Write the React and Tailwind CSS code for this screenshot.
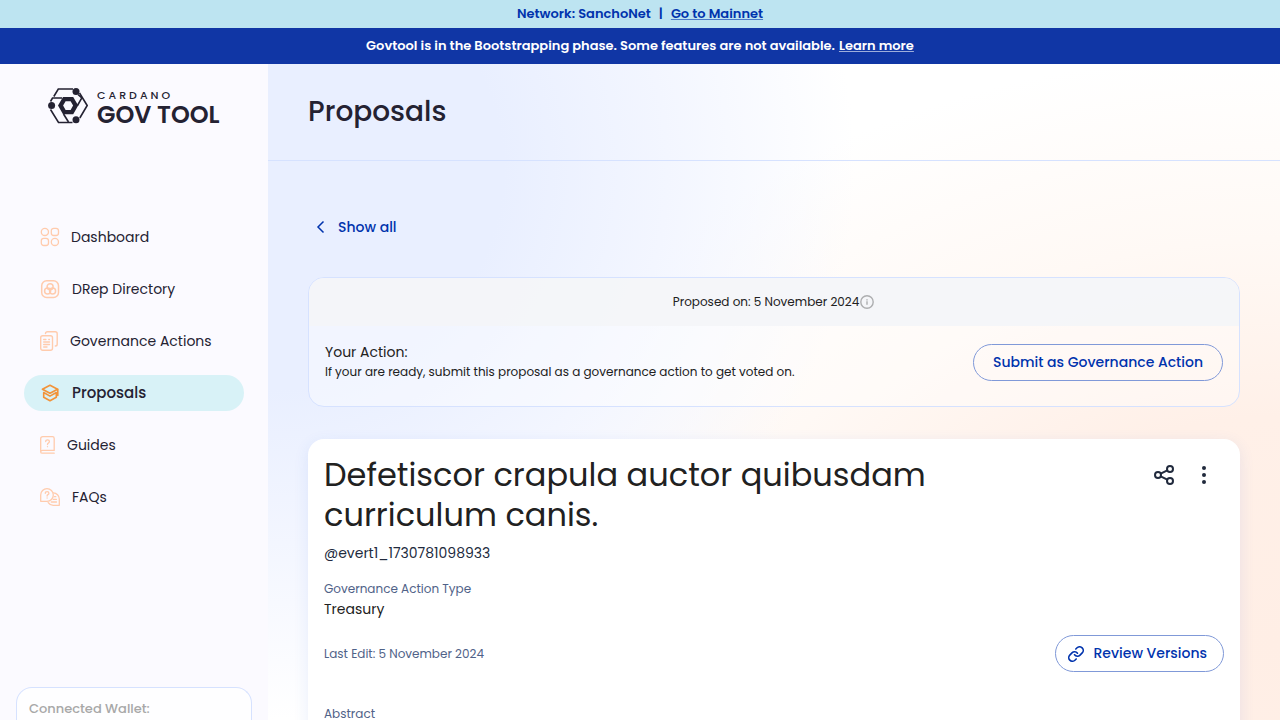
import React from "react";

const peach = "#ffcbad";

function Logo() {
  return (
    <svg width="40" height="36" viewBox="0 0 40 36" fill="none" aria-hidden="true">
      <g stroke="#242232" strokeWidth="1.6">
        <path d="M5.800 8.500 10.300 1H25" />
        <path d="M2.500 13.500 4.500 10H14" />
        <path d="M31.500 5 39.200 17.500 31.800 30" />
        <path d="M2.500 21.500 10.500 34.500H24.500" />
        <path d="M15.500 26 20.500 34" />
        <path d="M30 6.500 33.800 10 29.500 17.500" />
      </g>
      <path fillRule="evenodd" fill="#242232" d="M15 9h10.200l5 8.600-5 8.600H15l-5-8.600zM17.600 13.300 15.100 17.600l2.500 4.300h5l2.500-4.300-2.500-4.300z" />
      <circle cx="28" cy="3.500" r="3.500" fill="#242232" />
      <circle cx="3.600" cy="17.500" r="3.500" fill="#242232" />
      <circle cx="28" cy="31.800" r="3.500" fill="#242232" />
    </svg>
  );
}

function DashboardIcon() {
  return (
    <svg width="20" height="20" viewBox="0 0 20 20" fill="none" stroke={peach} strokeWidth="1.300" aria-hidden="true">
      <circle cx="4.900" cy="4.900" r="3.600" />
      <rect x="11.300" y="1.300" width="7.200" height="7.200" rx="2.500" />
      <rect x="1.300" y="11.300" width="7.200" height="7.200" rx="2.500" />
      <circle cx="14.900" cy="14.900" r="3.600" />
    </svg>
  );
}

function DirectoryIcon() {
  return (
    <svg width="20" height="20" viewBox="0 0 20 20" fill="none" stroke={peach} strokeWidth="1.500" aria-hidden="true">
      <rect x="1.700" y="1.700" width="16.800" height="16.800" rx="5" />
      <circle cx="10.100" cy="7.700" r="3" />
      <circle cx="7.600" cy="11.900" r="3" />
      <circle cx="12.600" cy="11.900" r="3" />
    </svg>
  );
}

function ActionsIcon() {
  return (
    <svg width="18" height="20" viewBox="0 0 18 20" fill="none" stroke={peach} strokeWidth="1.400" strokeLinecap="round" strokeLinejoin="round" aria-hidden="true">
      <rect x="0.700" y="4.800" width="11.800" height="14.500" rx="2" />
      <path d="M5.500 2.500Q5.500.7 7.500.7h7.700Q17.200.7 17.200 2.700v10.500Q17.200 15 15.300 15" />
      <path d="M3.700 8.500h2.200M8.800 8.500h.6M3.700 11h5.800M3.700 13.500h5.800M3.700 16h3.300" />
    </svg>
  );
}

function ProposalsIcon() {
  return (
    <svg width="20" height="20" viewBox="0 0 20 20" fill="none" stroke="#f29339" strokeWidth="1.600" strokeLinecap="round" strokeLinejoin="round" aria-hidden="true">
      <path d="M10 2.300 17.600 6.200 10 10.200 2.400 6.200z" />
      <path d="M17.800 6.400v6" />
      <path d="M3.700 9.500v4.700L10 17.700l6.300-3.500V9.500L10 13.100z" />
    </svg>
  );
}

function GuidesIcon() {
  return (
    <svg width="15" height="18" viewBox="0 0 15 18" fill="none" stroke={peach} strokeWidth="1.300" strokeLinecap="round" strokeLinejoin="round" aria-hidden="true">
      <path d="M.7 15.300V2.700q0-2 2-2H12.500q1.700 0 1.700 1.700v12H2.500Q.7 14.400.7 16q0 1.200 1.800 1.200h11.700" />
      <path d="M5.700 5.600q0-1.700 1.900-1.700 1.800 0 1.800 1.600 0 1-1.100 1.600-.8.400-.8 1.500M7.500 10.600v.1" />
    </svg>
  );
}

function FaqsIcon() {
  return (
    <svg width="20" height="18" viewBox="0 0 20 18" fill="none" stroke={peach} strokeWidth="1.300" strokeLinecap="round" strokeLinejoin="round" aria-hidden="true">
      <path d="M.7 13.300V7A6.300 6.300 0 1 1 7 13.300Z" />
      <path d="M13.300 4.900a6.200 6.200 0 0 1 6 6.200v6.200h-6.100a6.100 6.100 0 0 1-5-2.700" />
      <path d="M14.300 8.700h1.500M13.300 11.300h3.200M11.300 14h5.200" />
      <path d="M5.300 5.300q0-1.700 1.800-1.700t1.800 1.600q0 .9-1 1.500-.8.400-.8 1.400M7.100 9.900v.1" />
    </svg>
  );
}

const navItems = [
  { label: "Dashboard", icon: DashboardIcon, gap: "gap-[11px]" },
  { label: "DRep Directory", icon: DirectoryIcon, gap: "gap-3" },
  { label: "Governance Actions", icon: ActionsIcon, gap: "gap-3" },
  { label: "Proposals", icon: ProposalsIcon, gap: "gap-3", active: true },
  { label: "Guides", icon: GuidesIcon, gap: "gap-3" },
  { label: "FAQs", icon: FaqsIcon, gap: "gap-3" },
];

function Sidebar() {
  return (
    <aside className="flex w-[268px] shrink-0 flex-col bg-[#fbfaff]">
      <a href="#home" aria-label="Cardano Gov Tool" className="flex gap-[9px] pt-6 pl-12">
        <Logo />
        <span className="flex flex-col text-[#242232]">
          <span className="text-[11px] leading-[14px] font-medium tracking-[3px]">CARDANO</span>
          <span className="text-[24px] leading-[26px] font-semibold">GOV TOOL</span>
        </span>
      </a>
      <nav className="mt-[91px] flex flex-col gap-4 px-6">
        {navItems.map(({ label, icon: Icon, gap, active }) => (
          <a
            key={label}
            href={"#" + label}
            aria-current={active ? "page" : undefined}
            className={`flex h-9 items-center rounded-full px-4 text-[#242232] ${gap} ${active ? "bg-[#d8f2f7] text-[15px] font-medium" : "text-[14px]"}`}
          >
            <Icon />
            {label}
          </a>
        ))}
      </nav>
      <div className="mx-4 mt-auto h-[33px] rounded-t-2xl border border-b-0 border-[#d6e2ff] bg-white/70 px-3 pt-3 text-[13px] leading-[18px] font-medium text-[#a8a8a8]">
        Connected Wallet:
      </div>
    </aside>
  );
}

const outline =
  "flex h-[37px] items-center justify-center rounded-full border border-[#8099d8] text-[14px] font-medium text-[#0033ad]";

export default function App() {
  return (
    <div className="flex h-screen flex-col overflow-hidden font-['Poppins','Inter',sans-serif] text-[#212121]">
      <div className="flex h-7 shrink-0 items-center justify-center bg-[#bde4f1] text-[13px] font-semibold text-[#0033ad]">
        Network: SanchoNet<span className="px-2">|</span>
        <a href="#mainnet" className="underline decoration-[#0033ad]/60 decoration-1">Go to Mainnet</a>
      </div>
      <div className="flex h-9 shrink-0 items-center justify-center gap-1 bg-[#1036a5] text-[13px] font-semibold text-white">
        Govtool is in the Bootstrapping phase. Some features are not available.
        <a href="#learn" className="underline decoration-white/60 decoration-1">Learn more</a>
      </div>
      <div className="flex min-h-0 flex-1">
        <Sidebar />
        <main className="flex min-w-0 flex-1 flex-col bg-white bg-[radial-gradient(ellipse_58%_84%_at_0%_16%,#e9efff_0%,#e9efff_40%,#f3f6ff_68%,transparent_100%),radial-gradient(ellipse_82%_90%_at_100%_88%,#ffeee5_0%,#fff0e8_38%,#fff9f5_68%,transparent_100%)]">
          <header className="flex h-[97px] shrink-0 items-center border-b border-[#d6e2ff] px-10">
            <h1 className="text-[28px] font-medium text-[#242232]">Proposals</h1>
          </header>
          <div className="flex flex-col px-10 pt-12">
            <button className="flex h-9 items-center gap-2 self-start px-1 text-[14px] font-medium text-[#0033ad]">
              <svg width="18" height="18" viewBox="0 0 18 18" fill="none" stroke="currentColor" strokeWidth="1.500" aria-hidden="true">
                <path d="M11.500 3.500 6 9l5.500 5.500" />
              </svg>
              Show all
            </button>
            <section className="mt-8 overflow-hidden rounded-2xl border border-[#d6e2ff] bg-white/40">
              <div className="flex h-12 items-center justify-center bg-[#f4f5f8]/90 text-[12px]">
                Proposed on: 5 November 2024
                <svg width="16" height="16" viewBox="0 0 16 16" fill="none" stroke="#adaeb0" strokeWidth="1.400" aria-hidden="true">
                  <circle cx="8" cy="8" r="6.200" />
                  <path d="M8 7.300v3.500M8 5.200v1.200" />
                </svg>
              </div>
              <div className="flex items-start justify-between px-4 pt-[18px] pb-[22px]">
                <div>
                  <p className="text-[14px] leading-4">Your Action:</p>
                  <p className="text-[12px] leading-6">If your are ready, submit this proposal as a governance action to get voted on.</p>
                </div>
                <button className={`${outline} px-[19px]`}>Submit as Governance Action</button>
              </div>
            </section>
            <article className="mt-8 h-[420px] rounded-2xl bg-white p-4 shadow-[0_4px_15px_0_#2f62dc1a]">
              <div className="flex items-start justify-between">
                <h2 className="max-w-[660px] text-[32px] leading-10">Defetiscor crapula auctor quibusdam curriculum canis.</h2>
                <div className="flex">
                  <button aria-label="Share" className="flex size-10 items-center justify-center">
                    <svg width="24" height="24" viewBox="0 0 24 24" fill="none" stroke="#212a3d" strokeWidth="2" aria-hidden="true">
                      <circle cx="6" cy="12" r="3" />
                      <circle cx="18" cy="6" r="3" />
                      <circle cx="18" cy="18" r="3" />
                      <path d="m8.700 10.700 6.600-3.400M8.700 13.300l6.600 3.400" />
                    </svg>
                  </button>
                  <button aria-label="More options" className="flex size-10 items-center justify-center">
                    <svg width="24" height="24" viewBox="0 0 24 24" fill="#212a3d" aria-hidden="true">
                      <circle cx="12" cy="5" r="2" />
                      <circle cx="12" cy="12" r="2" />
                      <circle cx="12" cy="19" r="2" />
                    </svg>
                  </button>
                </div>
              </div>
              <p className="mt-2 text-[14px] leading-5 text-[#212a3d]">@evert1_1730781098933</p>
              <p className="mt-4 text-[12px] leading-5 text-[#506288]">Governance Action Type</p>
              <p className="text-[14px] leading-5">Treasury</p>
              <div className="mt-4 flex items-center justify-between">
                <p className="text-[12px] text-[#506288]">Last Edit: 5 November 2024</p>
                <button className={`${outline} gap-2.5 pr-4 pl-3`}>
                  <svg width="16" height="16" viewBox="1 1 22 22" fill="none" stroke="currentColor" strokeWidth="2.200" strokeLinecap="round" strokeLinejoin="round" aria-hidden="true">
                    <path d="M10 13a5 5 0 0 0 7.540.54l3-3a5 5 0 0 0-7.070-7.070l-1.720 1.710" />
                    <path d="M14 11a5 5 0 0 0-7.540-.54l-3 3a5 5 0 0 0 7.070 7.070l1.710-1.710" />
                  </svg>
                  Review Versions
                </button>
              </div>
              <p className="mt-8 text-[12px] leading-5 text-[#506288]">Abstract</p>
            </article>
          </div>
        </main>
      </div>
    </div>
  );
}
